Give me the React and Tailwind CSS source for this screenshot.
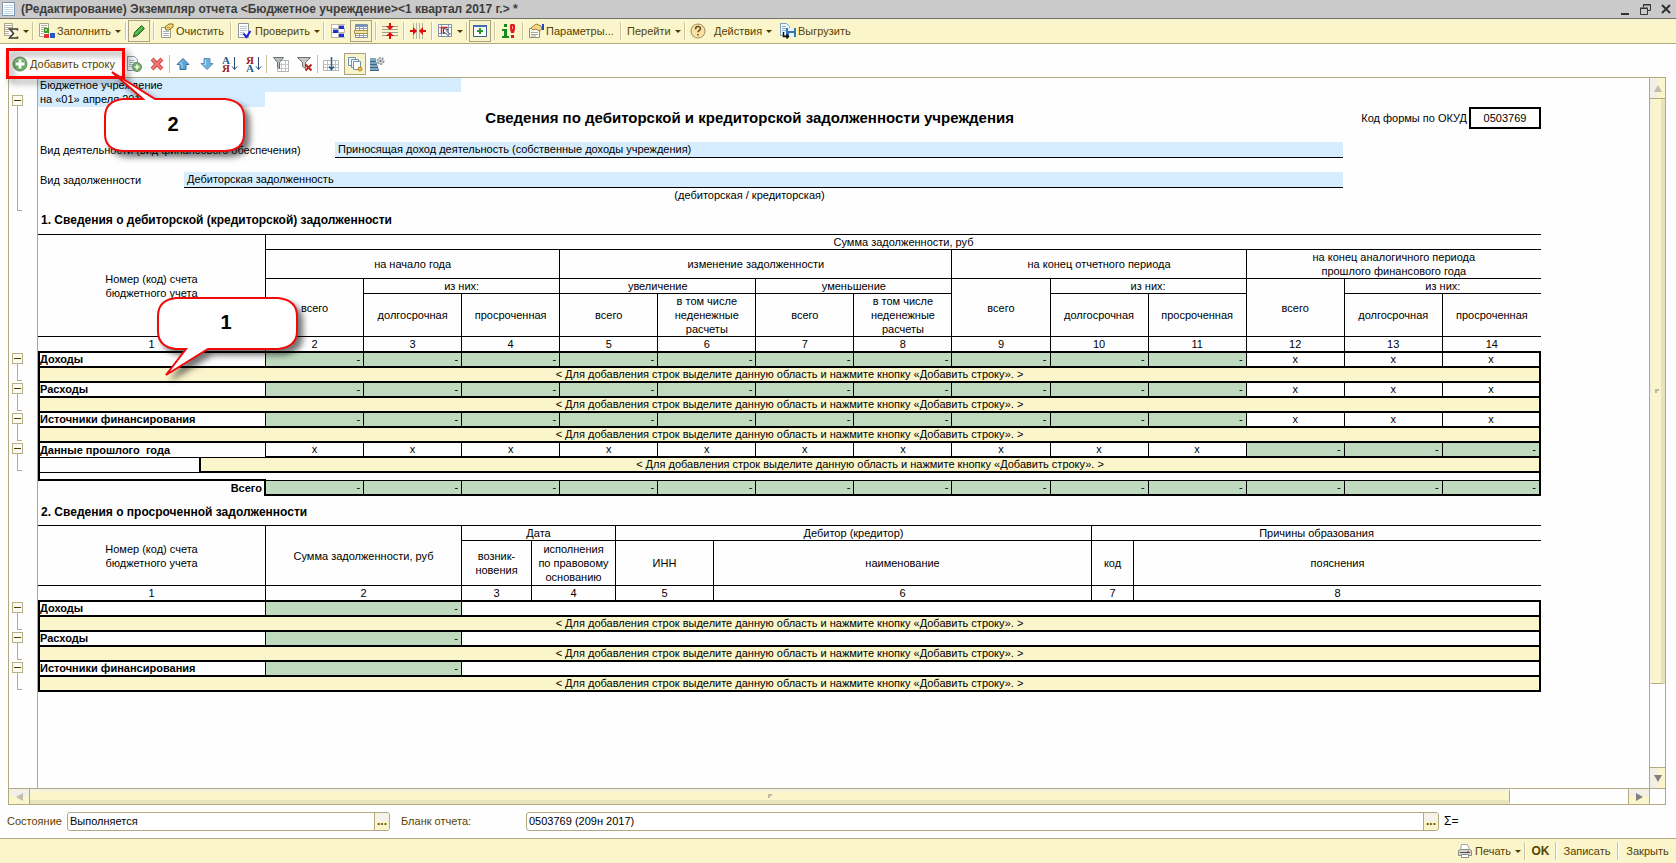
import React from 'react';

const HINT = '< Для добавления строк выделите данную область и нажмите кнопку «Добавить строку». >';

/* ---------- icons ---------- */

function Icon({ children }) {
  return (
    <svg width="16" height="16" viewBox="0 0 16 16" fill="none" className="shrink-0" aria-hidden="true">
      {children}
    </svg>
  );
}

const SumIcon = () => (
  <Icon>
    <path d="M1.500 .5h8v12h-8z" fill="#fff" stroke="#a9a48a" />
    <path d="M2 2.500h7M2 4.500h7M2 6.500h4M2 8.500h4M2 10.500h4" stroke="#b5ae8c" />
    <path d="M14.500 7.500v-1.500h-8l4 4.500-4 4.500h8v-1.500" stroke="#3c3c3c" strokeWidth="1.500" />
  </Icon>
);

const FillIcon = () => (
  <Icon>
    <path d="M.5 .5h9v13h-9z" fill="#fff" stroke="#a5a694" />
    <path d="M2 2.500h6M2 4.500h6M2 6.500h3M2 8.500h3M2 10.500h3" stroke="#b9b08a" />
    <path d="M5 5h5v5H5z" fill="#3e9b2f" />
    <path d="M5 11h5v4H5z" fill="#e3352b" />
    <path d="M11 10h5v5h-5z" fill="#2456c4" />
    <path d="M6 6h2v2H6z" fill="#9bd68c" />
  </Icon>
);

const PencilIcon = () => (
  <Icon>
    <path d="M10.500 2.500l3 3-7 7-4 1.500 1-4.500z" fill="#3fa535" stroke="#23701c" />
    <path d="M11 4.500l-6.500 6.500" stroke="#8fdc80" />
    <path d="M2 14.500l1-2.500 1.500 1.500z" fill="#6b4a1c" />
  </Icon>
);

const ClearIcon = () => (
  <Icon>
    <path d="M3.500 4.500h9v10h-9z" fill="#fff" stroke="#9a9a7e" />
    <path d="M5 8.500h6M5 10.500h6M5 12.500h6" stroke="#a9b3bb" />
    <path d="M7 4l4-3h4v3l-4 3H8z" fill="#f3d977" stroke="#8c6c1b" />
    <path d="M9 4.500h3" stroke="#c49a35" />
  </Icon>
);

const CheckIcon = () => (
  <Icon>
    <path d="M1.500 .5h10v14h-10z" fill="#fff" stroke="#8e9396" />
    <path d="M3 3.500h7M3 5.500h7M3 7.500h7M3 9.500h4M3 11.500h3" stroke="#b8c4cc" />
    <path d="M6.500 10.500l3 3.500 4-6" stroke="#1c22d8" strokeWidth="2" />
  </Icon>
);

const GroupIcon = () => (
  <Icon>
    <path d="M1 1h14v14H1z" fill="#b6b6b0" />
    <path d="M2 2h6v3H2zM2 6h1v3H2zM2 10h6v4H2zM14 2h1v3h-1zM9 6h5v3H9zM14 10h1v4h-1z" fill="#fff" />
    <path d="M9 3h5v3H9zM3 7h5v3H3zM9 11h5v3H9z" fill="#1b2ee0" />
  </Icon>
);

const TableIcon = () => (
  <Icon>
    <path d="M2.500 1.500h12v13h-12z" fill="#fff" stroke="#8a9098" />
    <path d="M3 2h11v2H3z" fill="#7195c5" />
    <path d="M3 5.500h11M3 12.500h11M6.500 4v10M10.500 4v10" stroke="#97a0a8" />
    <path d="M1.500 7.500h13v3h-13z" fill="#f2e49a" stroke="#a8954a" />
  </Icon>
);

const CollapseRowsIcon = () => (
  <Icon>
    <path d="M0 3.500h16M0 6.500h16M0 9.500h16M0 12.500h16" stroke="#9c9c96" />
    <path d="M8 7L4 3h3V0h2v3h3zM8 9l-4 4h3v3h2v-3h3z" fill="#e00d0d" />
  </Icon>
);

const CollapseColsIcon = () => (
  <Icon>
    <path d="M3.500 0v16M6.500 0v16M9.500 0v16M12.500 0v16" stroke="#b4b4a8" />
    <path d="M7 8L3 4v3H0v2h3v3zM9 8l4-4v3h3v2h-3v3z" fill="#e00d0d" />
  </Icon>
);

const SelectIcon = () => (
  <Icon>
    <path d="M1.500 1.500h13v12h-13z" fill="#fff" stroke="#7f8fa5" />
    <path d="M2 4.500h12M2 10.500h12M4.500 2v11M11.500 2v11" stroke="#8fa0b6" />
    <path d="M4.500 10.500v-6h6" stroke="#d92525" strokeWidth="1.500" />
    <path d="M6.500 5.500v5l1.500-1 3 3 1.500-1.500-3-3 1.500-1.500z" fill="#fff" stroke="#2b3f5c" />
  </Icon>
);

const WindowPlusIcon = () => (
  <Icon>
    <path d="M1.500 2.500h13v11h-13z" fill="#fff" stroke="#3d5f8c" />
    <path d="M1 2h14v2H1z" fill="#3f6fae" />
    <path d="M7 5h2v2h2v2H9v2H7V9H5V7h2z" fill="#1f9d2b" />
  </Icon>
);

const InfoIcon = () => (
  <Icon>
    <path d="M3 1h3v3H3zM1 6h5v7h2v2H1v-2h2V8H1z" fill="#158d1c" />
    <path d="M10 1h3l1 1v4l-1 4h-3l-1-4V2zM10 12h3v3h-3z" fill="#e01b1b" />
    <path d="M11 3h1v3h-1z" fill="#ff9d9d" />
  </Icon>
);

const ParamsIcon = () => (
  <Icon>
    <path d="M1.500 5.500h10v9h-10z" fill="#fff" stroke="#8d8d78" />
    <path d="M3 9.500h7M3 11.500h7M3 13h5" stroke="#a8a890" />
    <path d="M3 5l5-4 5 2 1 3-3 2-3-2-3 1z" fill="#f5d98a" stroke="#a27c28" />
    <path d="M14 1h2v6h-2z" fill="#2148c8" />
  </Icon>
);

const HelpIcon = () => (
  <Icon>
    <circle cx="8" cy="8" r="7" fill="#fbe0a0" stroke="#a08a62" />
    <path d="M5.500 6.200c0-3.500 5-3.500 5-.6 0 1.700-2.500 1.700-2.500 3.700M8 11v1.500" stroke="#5c4a2a" strokeWidth="1.500" />
  </Icon>
);

const UnloadIcon = () => (
  <Icon>
    <path d="M.5 .5h6l3 3v9h-9z" fill="#eef5fb" stroke="#7f9fba" />
    <path d="M2 3.500h4M2 5.500h6M2 7.500h6" stroke="#8fb1cc" />
    <path d="M6 5h10v9H6z" fill="#3577b4" />
    <path d="M8 5h6v3H8zM9 10h5v4H9z" fill="#e8f1f8" />
    <path d="M3.500 9v4.500h5M6.500 11.500l2 2-2 2" stroke="#111" strokeWidth="1.500" />
  </Icon>
);

const AddIcon = () => (
  <Icon>
    <circle cx="8" cy="8" r="7" fill="#68ad5c" stroke="#6f8a6b" />
    <path d="M3 6a5.500 5.500 0 0 1 10 0" stroke="#a8d79c" />
    <path d="M6.500 3.500h3v3h3v3h-3v3h-3v-3h-3v-3h3z" fill="#fff" />
  </Icon>
);

const CopyAddIcon = () => (
  <Icon>
    <path d="M1.500 .5h7l3 3v11h-10z" fill="#f1f5f8" stroke="#8b98a3" />
    <path d="M3 4.500h5M3 6.500h6M3 8.500h4M3 10.500h3" stroke="#a4b4c1" />
    <circle cx="11" cy="11" r="4.500" fill="#6fb462" stroke="#6f8a6b" />
    <path d="M11 8.500v5M8.500 11h5" stroke="#fff" strokeWidth="1.500" />
  </Icon>
);

const DeleteIcon = () => (
  <Icon>
    <path d="M3 3l10 10M13 3L3 13" stroke="#c9524c" strokeWidth="4" />
    <path d="M3 3l10 10M13 3L3 13" stroke="#f5776f" strokeWidth="2" />
  </Icon>
);

const UpIcon = () => (
  <Icon>
    <path d="M8 2.500l6 6h-3v5H5v-5H2z" fill="#5aa6d6" stroke="#3b6f93" />
    <path d="M8 4.500l-3.500 3.500H7v4" stroke="#a9d5f0" />
  </Icon>
);

const DownIcon = () => (
  <Icon>
    <path d="M8 13.500l6-6h-3v-5H5v5H2z" fill="#6fb2e0" stroke="#5a8fb4" />
    <path d="M6.500 4v5H5" stroke="#b7dcf4" />
  </Icon>
);

function SortIcon({ top, bottom, topClass, bottomClass }) {
  return (
    <span className="flex shrink-0 items-center gap-px" aria-hidden="true">
      <span className="flex flex-col font-['Liberation_Serif',serif] text-[11px] leading-[8px] font-bold">
        <span className={topClass}>{top}</span>
        <span className={bottomClass}>{bottom}</span>
      </span>
      <svg width="7" height="14" viewBox="0 0 7 14" fill="none">
        <path d="M3.500 0v12M1 9.500l2.500 3 2.500-3" stroke="#2b4c6c" />
      </svg>
    </span>
  );
}

const FilterIcon = () => (
  <Icon>
    <path d="M4.500 4.500h11v11h-11z" fill="#fff" stroke="#b5b5b5" />
    <path d="M5 8.500h10M5 12.500h10M8.500 7v8M12.500 5v10" stroke="#c6c6c6" />
    <path d="M.5 1.500h10l-4 5v6l-2-1.500v-4.500z" fill="#b9bdc0" stroke="#6d7275" />
  </Icon>
);

const FilterOffIcon = () => (
  <Icon>
    <path d="M.5 1.500h13l-5 5v6l-3-2v-4z" fill="#c3c7ca" stroke="#6d7275" />
    <path d="M8.500 8.500l6 6M14.500 8.500l-6 6" stroke="#b3261f" strokeWidth="2" />
  </Icon>
);

const ColumnDownIcon = () => (
  <Icon>
    <path d="M.5 4.500h15v10H.5z" fill="#fff" stroke="#b5b5b5" />
    <path d="M1 8.500h14M1 11.500h14M4.500 5v9M12.500 5v9" stroke="#c0c0c0" />
    <path d="M8.500 1v12M6 10.500l2.500 3 2.500-3" stroke="#2a5f8f" strokeWidth="1.500" />
  </Icon>
);

const LayersIcon = () => (
  <Icon>
    <path d="M1.500 1.500h7v8h-7z" fill="#f2f7fb" stroke="#6d93ae" />
    <path d="M4.500 3.500h7v8h-7z" fill="#f2f7fb" stroke="#6d93ae" />
    <path d="M6.500 5.500h7v8h-7z" fill="#fff" stroke="#6d93ae" />
    <circle cx="13" cy="13" r="2" fill="#e9b65a" stroke="#c08523" />
  </Icon>
);

const ListGearIcon = () => (
  <Icon>
    <path d="M1 2h6v3H1zM1 6h7v2H1zM1 9h8v2H1zM1 12h9v3H1z" fill="#7da6c2" />
    <path d="M1 5.500h6M1 8.500h7M1 11.500h8M1 14.500h9" stroke="#45687f" />
    <circle cx="11.500" cy="5" r="3" fill="#d9dcde" stroke="#9a9fa3" strokeWidth="2" strokeDasharray="2 1" />
    <circle cx="11.500" cy="5" r="1" fill="#6b7073" />
  </Icon>
);

const PrinterIcon = () => (
  <Icon>
    <path d="M4.500 1.500h6l2 5h-9z" fill="#fff" stroke="#a5a5a0" />
    <path d="M1.500 7.500l2-1h9l2 1v5h-13z" fill="#d6d6d3" stroke="#8b8b88" />
    <path d="M3 9.500h10" stroke="#4f4f4f" />
    <path d="M10 8.500h2" stroke="#e5483a" />
    <path d="M4.500 11.500h7v3h-7z" fill="#fff" stroke="#8d8d89" />
  </Icon>
);

/* ---------- toolbar parts ---------- */

function Sep() {
  return <span className="h-[18px] w-[2px] shrink-0 border-r border-white bg-[#c9c3a0]" />;
}

function Caret() {
  return (
    <svg width="6" height="3" viewBox="0 0 6 3" className="ml-[4px] shrink-0" aria-hidden="true">
      <path d="M0 0h6L3 3z" fill="#4d3a00" />
    </svg>
  );
}

function Tool({ icon, label, title, caret, className = '' }) {
  return (
    <button type="button" title={title} aria-label={label || title} className={`flex h-[22px] shrink-0 items-center whitespace-nowrap ${className}`}>
      {icon}
      {label && <span className={icon ? 'ml-[2px]' : ''}>{label}</span>}
      {caret && <Caret />}
    </button>
  );
}

function PressedTool({ icon, title }) {
  return (
    <button
      type="button"
      title={title}
      aria-label={title}
      aria-pressed="true"
      className="mr-[3px] ml-px flex h-[22px] w-[22px] shrink-0 items-center justify-center border border-[#a9a27c] bg-[#f8f3cb]"
    >
      {icon}
    </button>
  );
}

/* ---------- sheet parts ---------- */

function OutlineGroup({ className }) {
  return (
    <div className={`flex flex-col pl-[3px] ${className}`}>
      <button
        type="button"
        aria-label="Свернуть группу"
        className="flex h-[11px] w-[11px] shrink-0 items-center justify-center border border-[#b5ae86] bg-[#fdfcf3]"
      >
        <span className="h-px w-[7px] bg-[#4d3a00]" />
      </button>
      <div className="ml-[5px] w-[5px] flex-1 border-b border-l border-[#b5ae86]" />
    </div>
  );
}

function Head({ className = '', children, ...rest }) {
  return (
    <th className={`border-r border-b border-black px-0 py-0 font-normal leading-[14px] ${className}`} {...rest}>
      {children}
    </th>
  );
}

function Value({ value, last }) {
  const look = value === '-' ? 'bg-[#bfdabf] pr-[3px] text-right' : 'text-center';
  return <td className={`border-b-2 border-black p-0 ${last ? 'border-r-2' : 'border-r'} ${look}`}>{value}</td>;
}

function HintRow({ span }) {
  return (
    <tr className="h-[15px]">
      <td colSpan={span} className="border-r-2 border-b-2 border-l-2 border-black bg-[#faf5cb] p-0 text-center">
        {HINT}
      </td>
    </tr>
  );
}

function repeat(value, count) {
  return Array(count).fill(value);
}

const debtRows = [
  { name: 'Доходы', values: [...repeat('-', 10), ...repeat('x', 3)] },
  { name: 'Расходы', values: [...repeat('-', 10), ...repeat('x', 3)] },
  { name: 'Источники финансирования', values: [...repeat('-', 10), ...repeat('x', 3)] },
];

const lastYear = [...repeat('x', 10), ...repeat('-', 3)];
const overdueRows = ['Доходы', 'Расходы', 'Источники финансирования'];

function DebtTable() {
  return (
    <table className="w-full table-fixed border-separate border-spacing-0 border-t border-black leading-[13px]">
      <colgroup>
        <col className="w-[161px]" />
        <col className="w-[67px]" />
        {repeat(0, 13).map((_, i) => (
          <col key={i} />
        ))}
      </colgroup>
      <thead>
        <tr className="h-[15px]">
          <Head colSpan={2} rowSpan={4}>
            Номер (код) счета
            <br />
            бюджетного учета
          </Head>
          <Head colSpan={13} className="border-r-0">Сумма задолженности, руб</Head>
        </tr>
        <tr className="h-[29px]">
          <Head colSpan={3}>на начало года</Head>
          <Head colSpan={4}>изменение задолженности</Head>
          <Head colSpan={3}>на конец отчетного периода</Head>
          <Head colSpan={3} className="border-r-0">
            на конец аналогичного периода
            <br />
            прошлого финансового года
          </Head>
        </tr>
        <tr className="h-[15px]">
          <Head rowSpan={2}>всего</Head>
          <Head colSpan={2}>из них:</Head>
          <Head colSpan={2}>увеличение</Head>
          <Head colSpan={2}>уменьшение</Head>
          <Head rowSpan={2}>всего</Head>
          <Head colSpan={2}>из них:</Head>
          <Head rowSpan={2}>всего</Head>
          <Head colSpan={2} className="border-r-0">из них:</Head>
        </tr>
        <tr className="h-[43px]">
          <Head>долгосрочная</Head>
          <Head>просроченная</Head>
          <Head>всего</Head>
          <Head>
            в том числе
            <br />
            неденежные
            <br />
            расчеты
          </Head>
          <Head>всего</Head>
          <Head>
            в том числе
            <br />
            неденежные
            <br />
            расчеты
          </Head>
          <Head>долгосрочная</Head>
          <Head>просроченная</Head>
          <Head>долгосрочная</Head>
          <Head className="border-r-0">просроченная</Head>
        </tr>
        <tr className="h-[16px]">
          <Head colSpan={2} className="border-b-2">1</Head>
          {repeat(0, 13).map((_, i) => (
            <Head key={i} className={i === 12 ? 'border-r-0 border-b-2' : 'border-b-2'}>
              {i + 2}
            </Head>
          ))}
        </tr>
      </thead>
      <tbody>
        {debtRows.map((row) => (
          <React.Fragment key={row.name}>
            <tr className="h-[15px]">
              <th colSpan={2} className="border-r border-b-2 border-l-2 border-black p-0 text-left font-bold">
                {row.name}
              </th>
              {row.values.map((v, i) => (
                <Value key={i} value={v} last={i === 12} />
              ))}
            </tr>
            <HintRow span={15} />
          </React.Fragment>
        ))}
        <tr className="h-[15px]">
          <th colSpan={2} className="border-r border-b border-l-2 border-black p-0 text-left font-bold whitespace-pre">
            {'Данные прошлого  года'}
          </th>
          {lastYear.map((v, i) => (
            <Value key={i} value={v} last={i === 12} />
          ))}
        </tr>
        <tr className="h-[15px]">
          <td className="border-b border-l-2 border-black p-0" />
          <td colSpan={14} className="border-r-2 border-b-2 border-l-2 border-black bg-[#faf5cb] p-0 text-center">
            {HINT}
          </td>
        </tr>
        <tr className="h-[8px]">
          <td colSpan={2} className="border-b-2 border-l-2 border-black p-0" />
          <td colSpan={13} className="border-r-2 border-b border-black p-0" />
        </tr>
        <tr className="h-[15px]">
          <th colSpan={2} className="border-r-2 border-black p-0 pr-[2px] text-right font-bold">Всего</th>
          {repeat('-', 13).map((v, i) => (
            <Value key={i} value={v} last={i === 12} />
          ))}
        </tr>
      </tbody>
    </table>
  );
}

function OverdueTable() {
  return (
    <table className="w-full table-fixed border-separate border-spacing-0 border-t border-black leading-[13px]">
      <colgroup>
        <col className="w-[228px]" />
        <col className="w-[196px]" />
        <col className="w-[70px]" />
        <col className="w-[84px]" />
        <col className="w-[98px]" />
        <col className="w-[378px]" />
        <col className="w-[42px]" />
        <col />
      </colgroup>
      <thead>
        <tr className="h-[15px]">
          <Head rowSpan={2}>
            Номер (код) счета
            <br />
            бюджетного учета
          </Head>
          <Head rowSpan={2}>Сумма задолженности, руб</Head>
          <Head colSpan={2}>Дата</Head>
          <Head colSpan={2}>Дебитор (кредитор)</Head>
          <Head colSpan={2} className="border-r-0">Причины образования</Head>
        </tr>
        <tr className="h-[45px]">
          <Head>
            возник-
            <br />
            новения
          </Head>
          <Head>
            исполнения
            <br />
            по правовому
            <br />
            основанию
          </Head>
          <Head>ИНН</Head>
          <Head>наименование</Head>
          <Head>код</Head>
          <Head className="border-r-0">пояснения</Head>
        </tr>
        <tr className="h-[16px]">
          {repeat(0, 8).map((_, i) => (
            <Head key={i} className={i === 7 ? 'border-r-0 border-b-2' : 'border-b-2'}>
              {i + 1}
            </Head>
          ))}
        </tr>
      </thead>
      <tbody>
        {overdueRows.map((name) => (
          <React.Fragment key={name}>
            <tr className="h-[15px]">
              <th className="border-r border-b-2 border-l-2 border-black p-0 text-left font-bold">{name}</th>
              <Value value="-" />
              <td colSpan={6} className="border-r-2 border-b-2 border-black p-0" />
            </tr>
            <HintRow span={8} />
          </React.Fragment>
        ))}
      </tbody>
    </table>
  );
}

/* ---------- scrollbars ---------- */

function Grip() {
  return <span className="h-[4px] w-[4px] border-t-2 border-l-2 border-[#bdb9a4]" />;
}

function VerticalScroll() {
  return (
    <div className="flex w-[16px] shrink-0 flex-col border-l border-[#b0a982]">
      <button type="button" aria-label="Вверх" className="flex h-[21px] items-center justify-center border-b border-[#b0a982] bg-linear-to-r from-[#f1efe6] from-50% to-[#faf5cb] to-50%">
        <svg width="8" height="7" viewBox="0 0 8 7"><path d="M4 0l4 7H0z" fill="#c0beb4" /></svg>
      </button>
      <div className="flex flex-[585] items-center justify-center border-r-4 border-b border-l-2 border-r-[#e9e3bd] border-b-[#b0a982] border-l-[#f1efe6] bg-[#faf5cb]">
        <Grip />
      </div>
      <div className="flex-[83]" />
      <button type="button" aria-label="Вниз" className="flex h-[21px] items-center justify-center border-t border-[#b0a982] bg-linear-to-r from-[#f1efe6] from-50% to-[#faf5cb] to-50%">
        <svg width="8" height="7" viewBox="0 0 8 7"><path d="M4 7l4-7H0z" fill="#808080" /></svg>
      </button>
    </div>
  );
}

function HorizontalScroll() {
  return (
    <div className="flex h-[16px] shrink-0 border-t border-[#b0a982]">
      <button type="button" aria-label="Влево" className="flex w-[21px] items-center justify-center border-r border-[#b0a982] bg-linear-to-b from-[#f1efe6] from-50% to-[#faf5cb] to-50%">
        <svg width="7" height="8" viewBox="0 0 7 8"><path d="M0 4l7-4v8z" fill="#c0beb4" /></svg>
      </button>
      <div className="flex flex-[1480] items-center justify-center border-t-2 border-r border-b-4 border-t-[#f1efe6] border-r-[#b0a982] border-b-[#e9e3bd] bg-[#faf5cb]">
        <Grip />
      </div>
      <div className="flex-[118]" />
      <button type="button" aria-label="Вправо" className="flex w-[22px] items-center justify-center border-x border-[#b0a982] bg-linear-to-b from-[#f1efe6] from-50% to-[#faf5cb] to-50%">
        <svg width="7" height="8" viewBox="0 0 7 8"><path d="M7 4L0 0v8z" fill="#808080" /></svg>
      </button>
      <div className="w-[15px]" />
    </div>
  );
}

function PickField({ id, value, className }) {
  return (
    <div className={`flex h-[19px] overflow-hidden rounded-[3px] border border-[#b0a982] bg-white ${className}`}>
      <input id={id} defaultValue={value} className="min-w-0 flex-1 bg-transparent pl-[2px] text-black outline-none" />
      <button type="button" aria-label="Выбрать" className="w-[15px] border-l border-[#b0a982] bg-linear-to-b from-[#f4f2ea] from-50% to-[#faf5cb] to-50% text-[12px] leading-[16px] font-bold text-[#6b4a00]">
        ...
      </button>
    </div>
  );
}

/* Numbered balloon with a tail; the path is drawn in the svg's own box */
function Callout({ number, path, height, className, textClass }) {
  return (
    <div className={`pointer-events-none absolute z-10 w-[144px] ${className}`}>
      <svg width="144" height={height} viewBox={`0 0 144 ${height}`} className="overflow-visible drop-shadow-[5px_5px_3px_rgba(0,0,0,0.55)]" aria-hidden="true">
        <path d={path} fill="#fff" stroke="#f00a0a" strokeWidth="2" />
      </svg>
      <span className={`absolute right-[4px] left-0 flex h-[52px] items-center justify-center text-[20px] font-bold text-black ${textClass}`}>
        {number}
      </span>
    </div>
  );
}

function App() {
  return (
    <div className="relative flex min-h-screen flex-col bg-[#fefefe] font-['Liberation_Sans',Arial,sans-serif] text-[11px] leading-[16px] text-[#574200]">
      <header className="flex h-[19px] shrink-0 items-center border-b border-[#6f6f6f] bg-[#cacaca] text-[#3c3c3c]">
        <svg width="14" height="14" viewBox="0 0 14 14" className="ml-[2px]" aria-hidden="true">
          <path d="M.5 .5h12v13H.5z" fill="#fff" stroke="#7b96ad" />
          <path d="M2 3.500h9M2 5.500h9M2 7.500h9M2 9.500h9M2 11.500h9" stroke="#c3d6e6" />
        </svg>
        <h1 className="ml-[5px] flex-1 text-[12px] font-bold whitespace-nowrap">
          (Редактирование) Экземпляр отчета &lt;Бюджетное учреждение&gt;&lt;1 квартал 2017 г.&gt; *
        </h1>
        <div className="flex items-center gap-[10px] pr-[5px]">
          <button type="button" aria-label="Свернуть">
            <svg width="9" height="11" viewBox="0 0 9 11"><path d="M0 9h8v2H0z" fill="#333" /></svg>
          </button>
          <button type="button" aria-label="Восстановить">
            <svg width="11" height="11" viewBox="0 0 11 11" fill="none">
              <path d="M3.500 3.500v-3h7v6h-3M3 1h8" stroke="#333" />
              <path d="M.5 4.500h7v6h-7zM0 4h8" stroke="#333" />
            </svg>
          </button>
          <button type="button" aria-label="Закрыть окно">
            <svg width="10" height="10" viewBox="0 0 10 10"><path d="M1 1l8 8M9 1L1 9" stroke="#333" strokeWidth="2" /></svg>
          </button>
        </div>
      </header>

      <nav className="flex h-[25px] shrink-0 items-center border-b border-[#b0a982] bg-[#faf5cb]">
        <Tool icon={<SumIcon />} title="Итоги" caret className="w-[32px] pl-[3px]" />
        <Sep />
        <Tool icon={<FillIcon />} label="Заполнить" caret className="w-[91px] pl-[5px]" />
        <Sep />
        <PressedTool icon={<PencilIcon />} title="Редактирование" />
        <Sep />
        <Tool icon={<ClearIcon />} label="Очистить" className="w-[75px] pl-[3px]" />
        <Sep />
        <Tool icon={<CheckIcon />} label="Проверить" caret className="w-[91px] pl-[5px]" />
        <Sep />
        <Tool icon={<GroupIcon />} title="Группировки" className="w-[24px] pl-[5px]" />
        <PressedTool icon={<TableIcon />} title="Таблица" />
        <Sep />
        <Tool icon={<CollapseRowsIcon />} title="Свернуть строки" className="w-[26px] justify-center" />
        <Sep />
        <Tool icon={<CollapseColsIcon />} title="Свернуть колонки" className="w-[26px] justify-center" />
        <Sep />
        <Tool icon={<SelectIcon />} title="Выделение" caret className="w-[33px] pl-[4px]" />
        <Sep />
        <PressedTool icon={<WindowPlusIcon />} title="Панель" />
        <Sep />
        <Tool icon={<InfoIcon />} title="Контроль" className="w-[26px] justify-center" />
        <Sep />
        <Tool icon={<ParamsIcon />} label="Параметры..." className="w-[96px] pl-[4px]" />
        <Sep />
        <Tool label="Перейти" caret className="w-[62px] pl-[5px]" />
        <Sep />
        <Tool icon={<HelpIcon />} title="Справка" className="w-[24px] pl-[4px]" />
        <Tool label="Действия" caret className="w-[66px] pl-[4px]" />
        <Tool icon={<UnloadIcon />} label="Выгрузить" className="pl-[4px]" />
      </nav>

      <nav className="flex h-[33px] shrink-0 items-center pt-[6px]">
        <Tool icon={<AddIcon />} label="Добавить строку" className="w-[123px] pl-[12px]" />
        <Tool icon={<CopyAddIcon />} title="Скопировать строку" className="w-[22px] justify-center" />
        <Tool icon={<DeleteIcon />} title="Удалить строку" className="w-[24px] justify-center" />
        <Sep />
        <Tool icon={<UpIcon />} title="Переместить вверх" className="w-[24px] justify-center" />
        <Tool icon={<DownIcon />} title="Переместить вниз" className="w-[23px] justify-center" />
        <Tool
          icon={<SortIcon top="А" bottom="Я" topClass="text-[#1f5f8f]" bottomClass="text-[#a01c1c]" />}
          title="Сортировать по возрастанию"
          className="w-[24px] justify-center"
        />
        <Tool
          icon={<SortIcon top="Я" bottom="А" topClass="text-[#a01c1c]" bottomClass="text-[#1f5f8f]" />}
          title="Сортировать по убыванию"
          className="w-[24px] justify-center"
        />
        <Sep />
        <Tool icon={<FilterIcon />} title="Отбор" className="w-[25px] justify-center" />
        <Tool icon={<FilterOffIcon />} title="Отключить отбор" className="w-[24px] justify-center" />
        <Sep />
        <Tool icon={<ColumnDownIcon />} title="Порядок" className="w-[24px] justify-center" />
        <PressedTool icon={<LayersIcon />} title="Слои" />
        <Tool icon={<ListGearIcon />} title="Настройка списка" />
      </nav>

      <main className="mr-[10px] ml-[8px] flex flex-1 flex-col border border-[#b0a982]">
        <div className="flex flex-1">
          <div className="flex w-[29px] shrink-0 flex-col border-r border-[#b0a982] pt-[17px]">
            <OutlineGroup className="mb-[142px] h-[116px]" />
            <OutlineGroup className="mb-[2px] h-[28px]" />
            <OutlineGroup className="mb-[2px] h-[28px]" />
            <OutlineGroup className="mb-[2px] h-[28px]" />
            <OutlineGroup className="mb-[131px] h-[28px]" />
            <OutlineGroup className="mb-[2px] h-[28px]" />
            <OutlineGroup className="mb-[2px] h-[28px]" />
            <OutlineGroup className="h-[28px]" />
          </div>

          <section className="min-w-0 flex-1 pr-[108px] text-[11px] leading-[14px] text-black">
            <div className="h-[14px] w-[423px] bg-[#d5edff] pl-[2px]">Бюджетное учреждение</div>
            <div className="h-[15px] w-[227px] bg-[#d5edff] pl-[2px]">на «01» апреля 2017 г.</div>
            <div className="flex h-[22px] items-center">
              <h2 className="flex-1 pl-[100px] text-center text-[15px] font-bold">
                Сведения по дебиторской и кредиторской задолженности учреждения
              </h2>
              <span className="pr-[2px]">Код формы по ОКУД</span>
              <span className="flex h-[22px] w-[72px] items-center justify-center border-2 border-black">0503769</span>
            </div>

            <div className="mt-[13px] mr-[198px] flex h-[16px] items-center">
              <span className="w-[297px] pl-[2px]">Вид деятельности (вид финансового обеспечения)</span>
              <span className="h-[16px] flex-1 border-b border-black bg-[#d5edff] pl-[3px]">
                Приносящая доход деятельность (собственные доходы учреждения)
              </span>
            </div>
            <div className="mt-[14px] mr-[198px] flex h-[16px] items-center">
              <span className="w-[146px] pl-[2px]">Вид задолженности</span>
              <span className="h-[16px] flex-1 border-b border-black bg-[#d5edff] pl-[3px]">Дебиторская задолженность</span>
            </div>
            <p className="pr-[80px] text-center">(дебиторская / кредиторская)</p>

            <h3 className="mt-[11px] mb-[7px] pl-[3px] text-[12px] font-bold">
              1. Сведения о дебиторской (кредиторской) задолженности
            </h3>
            <DebtTable />
            <h3 className="mt-[9px] mb-[6px] pl-[3px] text-[12px] font-bold">2. Сведения о просроченной задолженности</h3>
            <OverdueTable />
          </section>

          <VerticalScroll />
        </div>
        <HorizontalScroll />
      </main>

      <div className="flex h-[33px] shrink-0 items-center pb-px pl-[7px]">
        <label htmlFor="state" className="w-[60px]">Состояние</label>
        <PickField id="state" value="Выполняется" className="w-[323px]" />
        <label htmlFor="blank" className="w-[136px] pl-[11px]">Бланк отчета:</label>
        <PickField id="blank" value="0503769 (209н 2017)" className="mr-[5px] flex-1" />
        <span className="w-[232px] text-[12px] text-black">Σ=</span>
      </div>

      <footer className="flex h-[25px] shrink-0 items-center justify-end border-t border-[#b0a982] bg-[#faf5cb]">
        <Tool icon={<PrinterIcon />} label="Печать" caret className="w-[67px]" />
        <Sep />
        <Tool label="OK" className="w-[29px] justify-center text-[12px] font-bold" />
        <Sep />
        <Tool label="Записать" className="w-[60px] justify-center" />
        <Sep />
        <Tool label="Закрыть" className="w-[57px] justify-center" />
      </footer>

      <div className="pointer-events-none absolute top-[48px] left-[6px] z-10 h-[31px] w-[119px] border-3 border-[#ff0000] drop-shadow-[4px_4px_3px_rgba(0,0,0,0.45)]" />
      <Callout
        number="2"
        height={82}
        path="M9 1L52 28H122Q141 30 141 46V63Q141 79 122 80H20Q2 79 2 63V46Q2 30 20 28H40Z"
        className="top-[71px] left-[103px]"
        textClass="top-[27px]"
      />
      <Callout
        number="1"
        height={80}
        path="M20 1H122Q141 3 141 19V34Q141 50 122 52H52L10 78L30 52H20Q2 50 2 34V19Q2 3 20 1Z"
        className="top-[297px] left-[156px]"
        textClass="-top-px"
      />
    </div>
  );
}

export default App;
